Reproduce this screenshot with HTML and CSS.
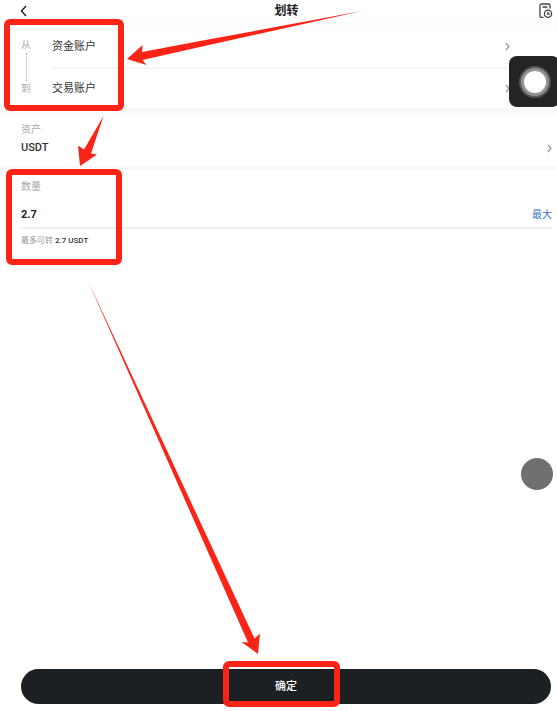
FILE: index.html
```html
<!DOCTYPE html>
<html lang="zh-CN">
<head>
<meta charset="utf-8">
<meta name="viewport" content="width=device-width, initial-scale=1">
<title>划转</title>
<link rel="stylesheet" href="styles.css">
</head>
<body>
<div class="page">
	<header class="header">
		<button type="button" class="icon_btn" aria-label="返回">
			<svg width="8" height="12" viewBox="0 0 8 12"><path d="M6 1 L1.5 6 L6 11" fill="none" stroke="#222" stroke-width="1.5"/></svg>
		</button>
		<h1>划转</h1>
		<button type="button" class="icon_btn" aria-label="划转记录">
			<svg width="14" height="16" viewBox="0 0 14 16" fill="none" stroke="#444" stroke-width="1.3">
				<path d="M4.500 14.300H2.500Q1 14.300 1 12.800V2.500Q1 1 2.500 1H9.500Q11 1 11 2.500V5.500M3.500 4H8.500"/>
				<circle cx="9" cy="10.700" r="3.600"/>
				<path d="M8.800 8.800V11H10.800"/>
			</svg>
		</button>
	</header>

	<!--划转账户-->
	<section class="accounts">
		<div class="direction">
			<span>从</span>
			<i class="dots"></i>
			<span>到</span>
		</div>
		<div class="account_list">
			<button type="button" class="account">资金账户
				<svg class="arrow" width="5" height="9" viewBox="0 0 5 9"><path d="M1 1L4 4.500L1 8"/></svg>
			</button>
			<button type="button" class="account">交易账户
				<svg class="arrow" width="5" height="9" viewBox="0 0 5 9"><path d="M1 1L4 4.500L1 8"/></svg>
			</button>
		</div>
	</section>

	<!--资产-->
	<button type="button" class="asset">
		<span class="asset_text">
			<span class="label">资产</span>
			<span class="asset_name">USDT</span>
		</span>
		<svg class="arrow" width="5" height="9" viewBox="0 0 5 9"><path d="M1 1L4 4.500L1 8"/></svg>
	</button>

	<!--数量-->
	<section class="amount">
		<label class="label" for="amount">数量</label>
		<div class="amount_row">
			<input type="text" id="amount" value="2.7" inputmode="decimal">
			<button type="button" class="max_btn">最大</button>
		</div>
		<p class="hint">最多可转 <b>2.7 USDT</b></p>
	</section>

	<footer class="footer">
		<button type="button" class="submit">确定</button>
	</footer>

	<!--悬浮按钮-->
	<div class="assistive"><i></i></div>
	<div class="touch_dot"></div>

	<!--操作步骤标注-->
	<svg class="marks" width="557" height="711" viewBox="0 0 557 711">
		<g fill="none" stroke="#fc2317" stroke-width="6">
			<rect x="7" y="22" width="114" height="86" rx="3"/>
			<rect x="9" y="172" width="110" height="90" rx="3"/>
			<rect x="226" y="664" width="111" height="40" rx="3"/>
		</g>
		<g fill="#fc2317">
			<path d="M362 11L200 41L142 52L142.500 45L127 59L146.500 65L142.500 60L200 47Z"/>
			<path d="M103.500 116L84 149.500L78 145.500L80 166L97 154.500L91 153.500Z"/>
			<path d="M88 281L248 642.500L241.500 642L258 654L260 633.500L254.500 638.500Z"/>
		</g>
	</svg>
</div>
</body>
</html>
```
FILE: styles.css
```css
html, body, h1, p {
	padding: 0;
	margin: 0;
}

body {
	background: #fff;
	color: #333;
	font-family: Roboto, "Noto Sans CJK SC", sans-serif;
	font-size: 11px;
	line-height: 16px;
}

button, input {
	padding: 0;
	border: 0;
	background: none;
	color: inherit;
	font: inherit;
}

button {
	cursor: pointer;
}

svg {
	display: block;
}

.page {
	position: relative;
	display: flex;
	flex-direction: column;
	min-height: 100vh;
	overflow: hidden;
}

.header {
	display: grid;
	grid-template-columns: 1fr auto 1fr;
	align-items: center;
	height: 22px;
	padding: 0 4px 0 20px;
	border-bottom: 4px solid #fcfcfc;
}

.header h1 {
	font-size: 12px;
	font-weight: 700;
	color: #222;
}

.icon_btn {
	justify-self: start;
}

.icon_btn:last-child {
	justify-self: end;
}

/*账户*/
.accounts {
	display: flex;
	padding-left: 21px;
	border-bottom: 5px solid #f9f9f9;
}

.direction {
	display: flex;
	flex-direction: column;
	align-items: center;
	width: 10px;
	margin-right: 21px;
	padding: 11px 0;
	font-size: 10px;
	color: #aaa;
}

.dots {
	flex: 1;
	border-left: 1px dotted #aaa;
}

.account_list {
	flex: 1;
}

.account {
	display: flex;
	justify-content: space-between;
	align-items: center;
	width: 100%;
	height: 41px;
	padding-right: 47px;
}

.account + .account {
	border-top: 2px solid #f6f6f6;
}

.arrow {
	fill: none;
	stroke: #999;
	stroke-width: 1.2;
}

.label {
	font-size: 10px;
	color: #aaa;
}

/*资产*/
.asset {
	display: flex;
	justify-content: space-between;
	align-items: flex-end;
	padding: 9px 5px 9px 21px;
	border-bottom: 5px solid #f9f9f9;
	text-align: left;
}

.asset_text {
	display: flex;
	flex-direction: column;
	gap: 2px;
}

.asset_name {
	font-weight: 500;
}

.asset .arrow {
	margin-bottom: 3px;
}

/*数量*/
.amount {
	padding: 9px 5px 0 21px;
}

.amount .label {
	display: block;
}

.amount_row {
	display: flex;
	align-items: center;
	height: 24px;
	margin-top: 8px;
	border-bottom: 2px solid #ededed;
}

.amount_row input {
	flex: 1;
	min-width: 0;
	font-weight: 700;
	color: #222;
	outline: none;
}

.max_btn {
	font-size: 10px;
	color: #3b76bd;
}

.hint {
	margin-top: 4px;
	font-size: 8px;
	color: #999;
}

.hint b {
	font-weight: 500;
	color: #333;
}

.footer {
	margin-top: auto;
	padding: 0 6px 7px 21px;
}

.submit {
	display: block;
	width: 100%;
	height: 35px;
	border-radius: 18px;
	background: #1d2022;
	color: #fff;
	font-weight: 500;
}

/*悬浮*/
.assistive {
	position: absolute;
	top: 56px;
	right: -3px;
	display: flex;
	justify-content: center;
	align-items: center;
	width: 51px;
	height: 51px;
	border-radius: 8px;
	background: #242424;
}

.assistive i {
	width: 22px;
	height: 22px;
	border-radius: 50%;
	background: #fff;
	box-shadow: 0 0 0 3px #929292, 0 0 0 5px #555;
}

.touch_dot {
	position: absolute;
	top: 458px;
	right: 4px;
	width: 32px;
	height: 32px;
	border-radius: 50%;
	background: #707070;
}

.marks {
	position: absolute;
	top: 0;
	left: 0;
	pointer-events: none;
}
```
